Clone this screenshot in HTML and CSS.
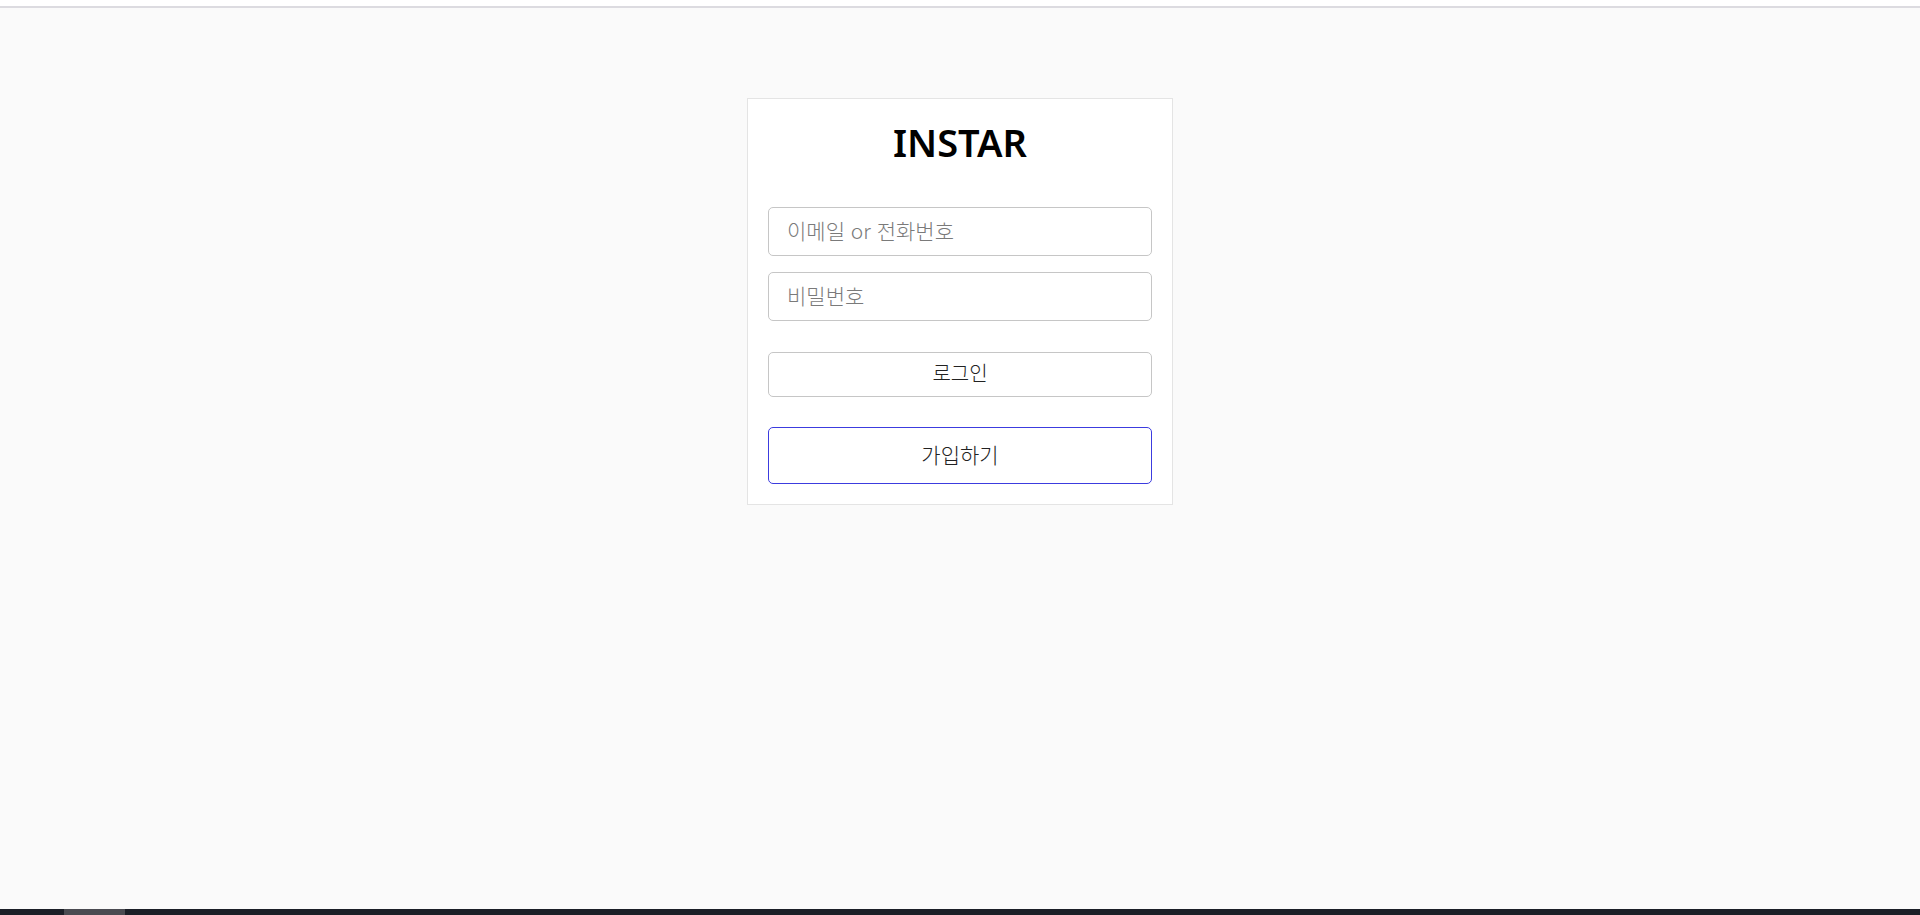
FILE: index.html
```html
<!DOCTYPE html>
<html lang="ko">
<head>
<meta charset="utf-8">
<title>INSTAR</title>
<link rel="stylesheet" href="styles.css">
</head>
<body>
<div class="page">
  <div class="topbar"></div>
  <main class="main">
    <form class="card">
      <h1 class="logo">INSTAR</h1>
      <input class="field field-first" type="text" placeholder="이메일 or 전화번호">
      <input class="field field-second" type="password" placeholder="비밀번호">
      <button class="btn btn-login" type="button">로그인</button>
      <button class="btn btn-signup" type="button">가입하기</button>
    </form>
  </main>
  <div class="bottombar"><span class="bottombar-tab"></span></div>
</div>
</body>
</html>
```
FILE: styles.css
```css
* { box-sizing: border-box; }
html, body { margin: 0; padding: 0; height: 100%; }
body {
  background: #fafafa;
  font-family: "Noto Sans", "Noto Sans CJK KR", sans-serif;
  color: #111;
}
.page {
  height: 100vh;
  display: flex;
  flex-direction: column;
}
.topbar {
  height: 8px;
  background: #ffffff;
  border-bottom: 2px solid #dcdbe0;
  flex: none;
}
.main {
  flex: 1;
  display: flex;
  flex-direction: column;
  align-items: center;
  padding-top: 90px;
}
.card {
  width: 426px;
  background: #ffffff;
  border: 1px solid #e4e4e4;
  padding: 20px;
  display: flex;
  flex-direction: column;
}
.logo {
  margin: 0 0 42px;
  font-family: "Noto Sans", sans-serif;
  font-size: 38px;
  line-height: 46px;
  font-weight: 600;
  text-align: center;
  color: #000;
}
.field {
  height: 49px;
  border: 1px solid #c6c6c6;
  border-radius: 5px;
  padding: 0 0 4px 18px;
  font-family: "Noto Sans CJK KR", sans-serif;
  font-weight: 300;
  font-size: 21px;
  color: #222;
  background: #fff;
  outline: none;
}
.field::placeholder { color: #7a7a7a; }
.field-second { margin-top: 16px; }
.btn {
  background: #fff;
  border-radius: 5px;
  font-family: "Noto Sans CJK KR", sans-serif;
  font-weight: 300;
  color: #222;
  cursor: pointer;
  padding: 0 0 4px;
}
.btn-login {
  margin-top: 31px;
  height: 45px;
  border: 1px solid #c6c6c6;
  font-size: 20px;
}
.btn-signup {
  margin-top: 30px;
  height: 57px;
  border: 1px solid #3c3cdf;
  font-size: 21px;
}
.bottombar {
  height: 6px;
  flex: none;
  background: #1b1f27;
  display: flex;
}
.bottombar-tab {
  margin-left: 64px;
  width: 61px;
  background: #4a4b51;
}
```
